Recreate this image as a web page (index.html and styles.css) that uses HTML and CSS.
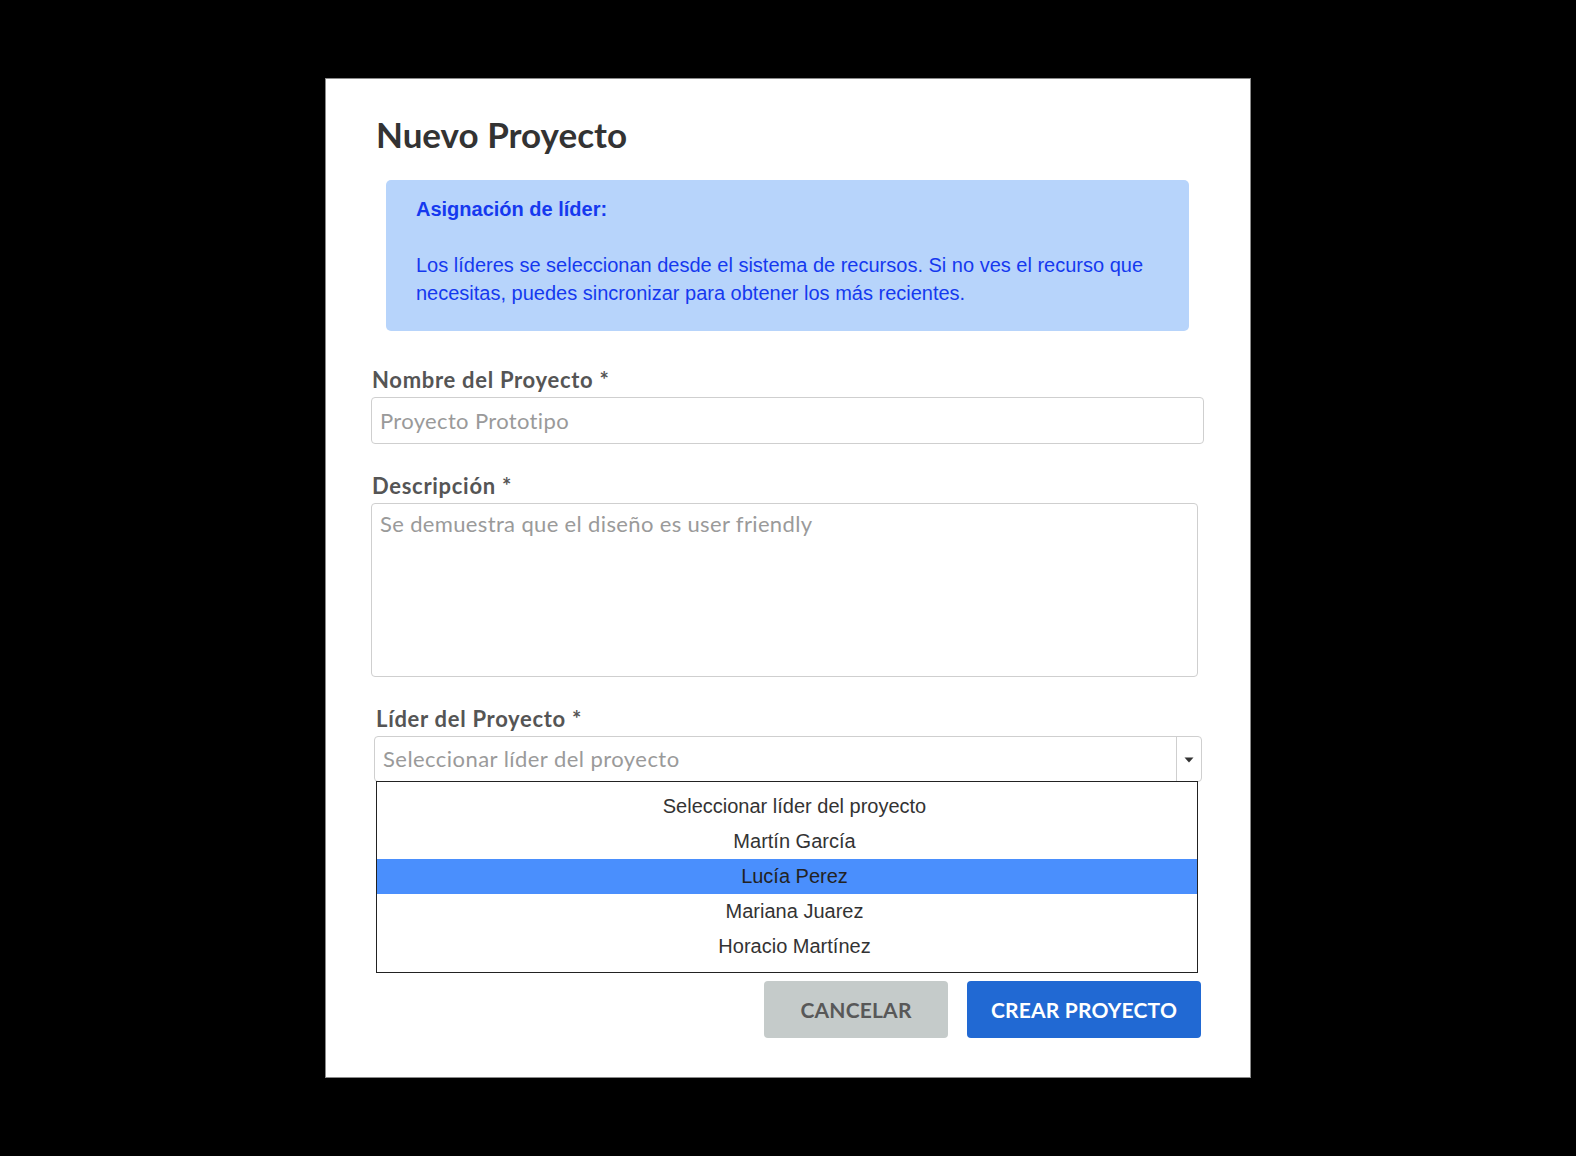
FILE: index.html
```html
<!DOCTYPE html>
<html lang="es">
<head>
<meta charset="utf-8">
<title>Nuevo Proyecto</title>
<link rel="stylesheet" href="styles.css">
</head>
<body>
<div class="dialog">
  <h1 class="title">Nuevo Proyecto</h1>
  <div class="info">
    <p class="info-head">Asignación de líder:</p>
    <p class="info-text">Los líderes se seleccionan desde el sistema de recursos. Si no ves el recurso que necesitas, puedes sincronizar para obtener los más recientes.</p>
  </div>
  <div class="field field-name">
    <label class="label">Nombre del Proyecto *</label>
    <div class="input">Proyecto Prototipo</div>
  </div>
  <div class="field field-desc">
    <label class="label">Descripción *</label>
    <div class="textarea">Se demuestra que el diseño es user friendly</div>
  </div>
  <div class="field field-lead">
    <label class="label">Líder del Proyecto *</label>
    <div class="select-wrap">
      <div class="select">
        <span class="select-text">Seleccionar líder del proyecto</span>
        <span class="select-arrow"><svg width="10" height="6" viewBox="0 0 10 6"><path d="M0.5 0.5h9L5 5.5z" fill="#333"/></svg></span>
      </div>
      <ul class="list">
        <li>Seleccionar líder del proyecto</li>
        <li>Martín García</li>
        <li class="active">Lucía Perez</li>
        <li>Mariana Juarez</li>
        <li>Horacio Martínez</li>
      </ul>
    </div>
  </div>
  <div class="actions">
    <button class="btn btn-cancel">CANCELAR</button>
    <button class="btn btn-create">CREAR PROYECTO</button>
  </div>
</div>
</body>
</html>
```

FILE: styles.css
```css
* { box-sizing: border-box; }
html, body { margin: 0; padding: 0; }
body {
  background: #000;
  width: 1576px;
  height: 1156px;
  display: flex;
  align-items: center;
  justify-content: center;
  font-family: Lato, "Open Sans", sans-serif;
}
.dialog {
  width: 926px;
  height: 1000px;
  background: #fff;
  border: 1px solid #8a8a8a;
  padding: 32px 46px 0 46px;
  display: flex;
  flex-direction: column;
}
.title {
  margin: 0 0 23px 4px;
  font-size: 35px;
  line-height: 46px;
  font-weight: 700;
  color: #333;
}
.info {
  margin-left: 14px;
  width: 803px;
  height: 151px;
  background: #b7d4fb;
  border-radius: 5px;
  padding: 15px 30px 0 30px;
  font-family: "Liberation Sans", Arial, sans-serif;
  color: #1539ef;
  font-size: 20px;
  line-height: 28px;
}
.info p { margin: 0; }
.info-head { font-weight: 700; margin-bottom: 28px !important; }
.label {
  display: block;
  font-size: 22px;
  line-height: 28px;
  font-weight: 700;
  color: #555;
  letter-spacing: 0.7px;
}
.field-name { margin-top: 35px; }
.field-name .label { margin-bottom: 3px; }
.input {
  width: 833px;
  height: 47px;
  margin-left: -1px;
  border: 1px solid #cfcfcf;
  border-radius: 4px;
  padding: 0 8px;
  font-size: 22px;
  line-height: 45px;
  color: #9a9a9a;
  letter-spacing: 0.35px;
}
.field-desc { margin-top: 28px; }
.field-desc .label { margin-bottom: 3px; }
.textarea {
  width: 827px;
  height: 174px;
  margin-left: -1px;
  border: 1px solid #cfcfcf;
  border-radius: 4px;
  padding: 4px 8px;
  font-size: 22px;
  line-height: 32px;
  color: #9a9a9a;
  letter-spacing: 0.35px;
}
.field-lead { margin-top: 28px; margin-left: 4px; }
.field-lead .label { margin-bottom: 3px; }
.select-wrap { position: relative; width: 828px; margin-left: -2px; }
.select {
  height: 46px;
  border: 1px solid #cfcfcf;
  border-radius: 4px;
  display: flex;
  align-items: stretch;
}
.select-text {
  flex: 1;
  padding: 0 8px;
  font-size: 22px;
  line-height: 44px;
  color: #9a9a9a;
  letter-spacing: 0.45px;
}
.select-arrow {
  width: 25px;
  border-left: 1px solid #cfcfcf;
  display: flex;
  align-items: center;
  justify-content: center;
  padding-top: 2px;
}
.list {
  position: absolute;
  left: 2px;
  top: 45px;
  width: 822px;
  margin: 0;
  padding: 7px 0 8px 15px;
  list-style: none;
  background: #fff;
  border: 1px solid #222;
  font-family: "Liberation Sans", Arial, sans-serif;
  font-size: 20px;
  color: #333;
  text-align: center;
}
.list li { height: 35px; line-height: 35px; margin-left: -15px; padding-left: 15px; }
.list li.active { background: #4a8ffd; color: #222; }
.actions {
  margin-top: 199px;
  display: flex;
  justify-content: flex-end;
  gap: 19px;
  padding-right: 3px;
}
.btn {
  height: 57px;
  border: none;
  border-radius: 4px;
  font-family: Lato, "Open Sans", sans-serif;
  font-weight: 700;
  font-size: 21px;
  letter-spacing: 0.2px;
}
.btn-cancel { width: 184px; background: #c5cbca; color: #585858; }
.btn-create { width: 234px; background: #2169d3; color: #fff; }
```
